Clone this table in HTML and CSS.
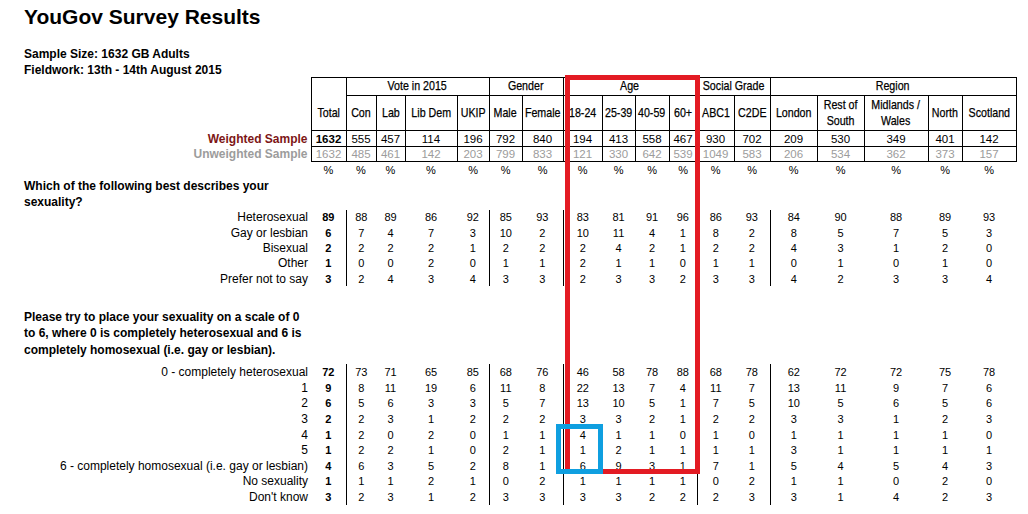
FILE: index.html
```html
<!DOCTYPE html>
<html lang="en">
<head>
<meta charset="utf-8">
<title>YouGov Survey Results</title>
<link rel="stylesheet" href="styles.css">
</head>
<body>
<div class="page">
  <h1 class="title">YouGov Survey Results</h1>
  <div class="meta">
    <div>Sample Size: 1632 GB Adults</div>
    <div>Fieldwork: 13th - 14th August 2015</div>
  </div>
  <table class="grid">
    <colgroup>
      <col class="w311"><col class="w35"><col class="w30"><col class="w29"><col class="w52"><col class="w32"><col class="w33"><col class="w41"><col class="w39"><col class="w33"><col class="w34"><col class="w28"><col class="w37"><col class="w36"><col class="w47"><col class="w47"><col class="w64"><col class="w34"><col class="w54">
    </colgroup>
    <tr class="r-h1">
      <td></td>
      <td class="hd open-bottom"></td>
      <td class="hd" colspan="4"><span class="nw">Vote in 2015</span></td>
      <td class="hd" colspan="2"><span class="nw">Gender</span></td>
      <td class="hd" colspan="4"><span class="nw">Age</span></td>
      <td class="hd" colspan="2"><span class="nw">Social Grade</span></td>
      <td class="hd" colspan="5"><span class="nw">Region</span></td>
    </tr>
    <tr class="r-h2">
      <td></td>
      <td class="hd open-top"><span class="nw">Total</span></td>
      <td class="hd"><span class="nw">Con</span></td><td class="hd"><span class="nw">Lab</span></td><td class="hd"><span class="nw">Lib Dem</span></td><td class="hd"><span class="nw">UKIP</span></td>
      <td class="hd"><span class="nw">Male</span></td><td class="hd"><span class="nw">Female</span></td>
      <td class="hd"><span class="nw">18-24</span></td><td class="hd"><span class="nw">25-39</span></td><td class="hd"><span class="nw">40-59</span></td><td class="hd"><span class="nw">60+</span></td>
      <td class="hd"><span class="nw">ABC1</span></td><td class="hd"><span class="nw">C2DE</span></td>
      <td class="hd"><span class="nw">London</span></td><td class="hd"><span class="nw">Rest of<br>South</span></td><td class="hd"><span class="nw">Midlands /<br>Wales</span></td><td class="hd"><span class="nw">North</span></td><td class="hd"><span class="nw">Scotland</span></td>
    </tr>
    <tr class="r-w">
      <td class="lbl lbl-w">Weighted Sample</td>
      <td class="wn b">1632</td><td class="wn">555</td><td class="wn">457</td><td class="wn">114</td><td class="wn">196</td><td class="wn">792</td><td class="wn">840</td><td class="wn">194</td><td class="wn">413</td><td class="wn">558</td><td class="wn">467</td><td class="wn">930</td><td class="wn">702</td><td class="wn">209</td><td class="wn">530</td><td class="wn">349</td><td class="wn">401</td><td class="wn">142</td>
    </tr>
    <tr class="r-u">
      <td class="lbl lbl-u">Unweighted Sample</td>
      <td class="wn gray">1632</td><td class="wn gray">485</td><td class="wn gray">461</td><td class="wn gray">142</td><td class="wn gray">203</td><td class="wn gray">799</td><td class="wn gray">833</td><td class="wn gray">121</td><td class="wn gray">330</td><td class="wn gray">642</td><td class="wn gray">539</td><td class="wn gray">1049</td><td class="wn gray">583</td><td class="wn gray">206</td><td class="wn gray">534</td><td class="wn gray">362</td><td class="wn gray">373</td><td class="wn gray">157</td>
    </tr>
    <tr class="r-pct">
      <td></td>
      <td class="n">%</td><td class="n">%</td><td class="n">%</td><td class="n">%</td><td class="n">%</td><td class="n">%</td><td class="n">%</td><td class="n">%</td><td class="n">%</td><td class="n">%</td><td class="n">%</td><td class="n">%</td><td class="n">%</td><td class="n">%</td><td class="n">%</td><td class="n">%</td><td class="n">%</td><td class="n">%</td>
    </tr>
    <tr class="r-q1">
      <td class="q q1">Which of the following best describes your sexuality?</td>
      <td colspan="18"></td>
    </tr>
    <tr class="r-d1">
      <td class="lbl">Heterosexual</td>
      <td class="n b">89</td><td class="n sep">88</td><td class="n">89</td><td class="n">86</td><td class="n">92</td><td class="n sep">85</td><td class="n">93</td><td class="n sep">83</td><td class="n">81</td><td class="n">91</td><td class="n">96</td><td class="n sep">86</td><td class="n">93</td><td class="n sep">84</td><td class="n">90</td><td class="n">88</td><td class="n">89</td><td class="n">93</td>
    </tr>
    <tr class="r-d1">
      <td class="lbl">Gay or lesbian</td>
      <td class="n b">6</td><td class="n sep">7</td><td class="n">4</td><td class="n">7</td><td class="n">3</td><td class="n sep">10</td><td class="n">2</td><td class="n sep">10</td><td class="n">11</td><td class="n">4</td><td class="n">1</td><td class="n sep">8</td><td class="n">2</td><td class="n sep">8</td><td class="n">5</td><td class="n">7</td><td class="n">5</td><td class="n">3</td>
    </tr>
    <tr class="r-d1">
      <td class="lbl">Bisexual</td>
      <td class="n b">2</td><td class="n sep">2</td><td class="n">2</td><td class="n">2</td><td class="n">1</td><td class="n sep">2</td><td class="n">2</td><td class="n sep">2</td><td class="n">4</td><td class="n">2</td><td class="n">1</td><td class="n sep">2</td><td class="n">2</td><td class="n sep">4</td><td class="n">3</td><td class="n">1</td><td class="n">2</td><td class="n">0</td>
    </tr>
    <tr class="r-d1">
      <td class="lbl">Other</td>
      <td class="n b">1</td><td class="n sep">0</td><td class="n">0</td><td class="n">2</td><td class="n">0</td><td class="n sep">1</td><td class="n">1</td><td class="n sep">2</td><td class="n">1</td><td class="n">1</td><td class="n">0</td><td class="n sep">1</td><td class="n">1</td><td class="n sep">0</td><td class="n">1</td><td class="n">0</td><td class="n">1</td><td class="n">0</td>
    </tr>
    <tr class="r-d1">
      <td class="lbl">Prefer not to say</td>
      <td class="n b">3</td><td class="n sep">2</td><td class="n">4</td><td class="n">3</td><td class="n">4</td><td class="n sep">3</td><td class="n">3</td><td class="n sep">2</td><td class="n">3</td><td class="n">3</td><td class="n">2</td><td class="n sep">3</td><td class="n">3</td><td class="n sep">4</td><td class="n">2</td><td class="n">3</td><td class="n">3</td><td class="n">4</td>
    </tr>
    <tr class="r-gap">
      <td colspan="19"></td>
    </tr>
    <tr class="r-q2">
      <td class="q q2">Please try to place your sexuality on a scale of 0 to 6, where 0 is completely heterosexual and 6 is completely homosexual (i.e. gay or lesbian).</td>
      <td colspan="18"></td>
    </tr>
    <tr class="r-d2">
      <td class="lbl">0 - completely heterosexual</td>
      <td class="n b">72</td><td class="n sep">73</td><td class="n">71</td><td class="n">65</td><td class="n">85</td><td class="n sep">68</td><td class="n">76</td><td class="n sep">46</td><td class="n">58</td><td class="n">78</td><td class="n">88</td><td class="n sep">68</td><td class="n">78</td><td class="n sep">62</td><td class="n">72</td><td class="n">72</td><td class="n">75</td><td class="n">78</td>
    </tr>
    <tr class="r-d2">
      <td class="lbl">1</td>
      <td class="n b">9</td><td class="n sep">8</td><td class="n">11</td><td class="n">19</td><td class="n">6</td><td class="n sep">11</td><td class="n">8</td><td class="n sep">22</td><td class="n">13</td><td class="n">7</td><td class="n">4</td><td class="n sep">11</td><td class="n">7</td><td class="n sep">13</td><td class="n">11</td><td class="n">9</td><td class="n">7</td><td class="n">6</td>
    </tr>
    <tr class="r-d2">
      <td class="lbl">2</td>
      <td class="n b">6</td><td class="n sep">5</td><td class="n">6</td><td class="n">3</td><td class="n">3</td><td class="n sep">5</td><td class="n">7</td><td class="n sep">13</td><td class="n">10</td><td class="n">5</td><td class="n">1</td><td class="n sep">7</td><td class="n">5</td><td class="n sep">10</td><td class="n">5</td><td class="n">6</td><td class="n">5</td><td class="n">6</td>
    </tr>
    <tr class="r-d2">
      <td class="lbl">3</td>
      <td class="n b">2</td><td class="n sep">2</td><td class="n">3</td><td class="n">1</td><td class="n">2</td><td class="n sep">2</td><td class="n">2</td><td class="n sep">3</td><td class="n">3</td><td class="n">2</td><td class="n">1</td><td class="n sep">2</td><td class="n">2</td><td class="n sep">3</td><td class="n">3</td><td class="n">1</td><td class="n">2</td><td class="n">3</td>
    </tr>
    <tr class="r-d2">
      <td class="lbl">4</td>
      <td class="n b">1</td><td class="n sep">2</td><td class="n">0</td><td class="n">2</td><td class="n">0</td><td class="n sep">1</td><td class="n">1</td><td class="n sep">4</td><td class="n">1</td><td class="n">1</td><td class="n">0</td><td class="n sep">1</td><td class="n">0</td><td class="n sep">1</td><td class="n">1</td><td class="n">1</td><td class="n">1</td><td class="n">0</td>
    </tr>
    <tr class="r-d2">
      <td class="lbl">5</td>
      <td class="n b">1</td><td class="n sep">2</td><td class="n">2</td><td class="n">1</td><td class="n">0</td><td class="n sep">2</td><td class="n">1</td><td class="n sep">1</td><td class="n">2</td><td class="n">1</td><td class="n">1</td><td class="n sep">1</td><td class="n">1</td><td class="n sep">3</td><td class="n">1</td><td class="n">1</td><td class="n">1</td><td class="n">1</td>
    </tr>
    <tr class="r-d2">
      <td class="lbl">6 - completely homosexual (i.e. gay or lesbian)</td>
      <td class="n b">4</td><td class="n sep">6</td><td class="n">3</td><td class="n">5</td><td class="n">2</td><td class="n sep">8</td><td class="n">1</td><td class="n sep">6</td><td class="n">9</td><td class="n">3</td><td class="n">1</td><td class="n sep">7</td><td class="n">1</td><td class="n sep">5</td><td class="n">4</td><td class="n">5</td><td class="n">4</td><td class="n">3</td>
    </tr>
    <tr class="r-d2">
      <td class="lbl">No sexuality</td>
      <td class="n b">1</td><td class="n sep">1</td><td class="n">1</td><td class="n">2</td><td class="n">1</td><td class="n sep">0</td><td class="n">2</td><td class="n sep">1</td><td class="n">1</td><td class="n">1</td><td class="n">1</td><td class="n sep">0</td><td class="n">2</td><td class="n sep">1</td><td class="n">1</td><td class="n">0</td><td class="n">2</td><td class="n">0</td>
    </tr>
    <tr class="r-d2">
      <td class="lbl">Don't know</td>
      <td class="n b">3</td><td class="n sep">2</td><td class="n">3</td><td class="n">1</td><td class="n">2</td><td class="n sep">3</td><td class="n">3</td><td class="n sep">3</td><td class="n">3</td><td class="n">2</td><td class="n">2</td><td class="n sep">2</td><td class="n">3</td><td class="n sep">3</td><td class="n">1</td><td class="n">4</td><td class="n">2</td><td class="n">3</td>
    </tr>
  </table>
  <div class="mark mark-red"></div>
  <div class="mark mark-blue"></div>
</div>
</body>
</html>
```

FILE: styles.css
```css
html, body {
  margin: 0;
  padding: 0;
  background: #ffffff;
}

body {
  font-family: "Liberation Sans", Arial, sans-serif;
  color: #000000;
}

.page {
  position: relative;
  width: 1028px;
  height: 514px;
  overflow: hidden;
}

.title {
  margin: 5px 0 0;
  padding-left: 24px;
  font-size: 21px;
  line-height: 24px;
  font-weight: bold;
}

.meta {
  margin-top: 17px;
  margin-bottom: -1px;
  padding-left: 24px;
  font-size: 12px;
  line-height: 16px;
  font-weight: bold;
}

.grid {
  table-layout: fixed;
  border-collapse: collapse;
  width: 1016px;
}

.grid td {
  padding: 0;
}

.w311 { width: 311px; }
.w28 { width: 28px; }
.w29 { width: 29px; }
.w30 { width: 30px; }
.w32 { width: 32px; }
.w33 { width: 33px; }
.w34 { width: 34px; }
.w35 { width: 35px; }
.w36 { width: 36px; }
.w37 { width: 37px; }
.w39 { width: 39px; }
.w41 { width: 41px; }
.w47 { width: 47px; }
.w52 { width: 52px; }
.w54 { width: 54px; }
.w64 { width: 64px; }

.r-h1 { height: 18px; }
.r-h2 { height: 35px; }
.r-w { height: 16px; }
.r-u { height: 15px; }
.r-pct { height: 16px; }
.r-d1 { height: 15.4px; }
.r-gap { height: 22.5px; }
.r-d2 { height: 15.6px; }

.hd {
  border: 1px solid #000000;
  text-align: center;
  vertical-align: middle;
  font-size: 13px;
  line-height: 16.5px;
  white-space: nowrap;
}

.nw {
  display: inline-block;
  margin: 0 -20px;
  transform: scaleX(0.82);
  vertical-align: middle;
  -webkit-text-stroke: 0.25px #000000;
}

.hd.open-bottom { border-bottom: none; }
.hd.open-top { border-top: none; }

.wn {
  border: 1px solid #000000;
  text-align: center;
  vertical-align: middle;
  font-size: 11.5px;
  line-height: 14px;
}

.gray { color: #9c9c9c; }

.lbl {
  text-align: right;
  padding-right: 3px !important;
  font-size: 12px;
  line-height: 14px;
  white-space: nowrap;
  vertical-align: middle;
}

.lbl-w { color: #7d1616; font-weight: bold; }
.lbl-u { color: #9c9c9c; font-weight: bold; }

.n {
  text-align: center;
  vertical-align: middle;
  font-size: 11px;
  line-height: 14px;
}

.b { font-weight: bold; }

.sep { border-left: 1px solid #000000; }

.q {
  padding-left: 24px !important;
  text-align: left;
  vertical-align: top;
  font-size: 12px;
  font-weight: bold;
}

.q1 { line-height: 16px; }

.q2 {
  line-height: 16.5px;
  padding-bottom: 6px !important;
}

.mark {
  position: absolute;
  box-sizing: border-box;
}

.mark-red {
  left: 565px;
  top: 75px;
  width: 135px;
  height: 399px;
  border: 5px solid #e31b23;
}

.mark-blue {
  left: 556px;
  top: 424px;
  width: 47px;
  height: 50px;
  border: 5px solid #0f9fe0;
}
```
